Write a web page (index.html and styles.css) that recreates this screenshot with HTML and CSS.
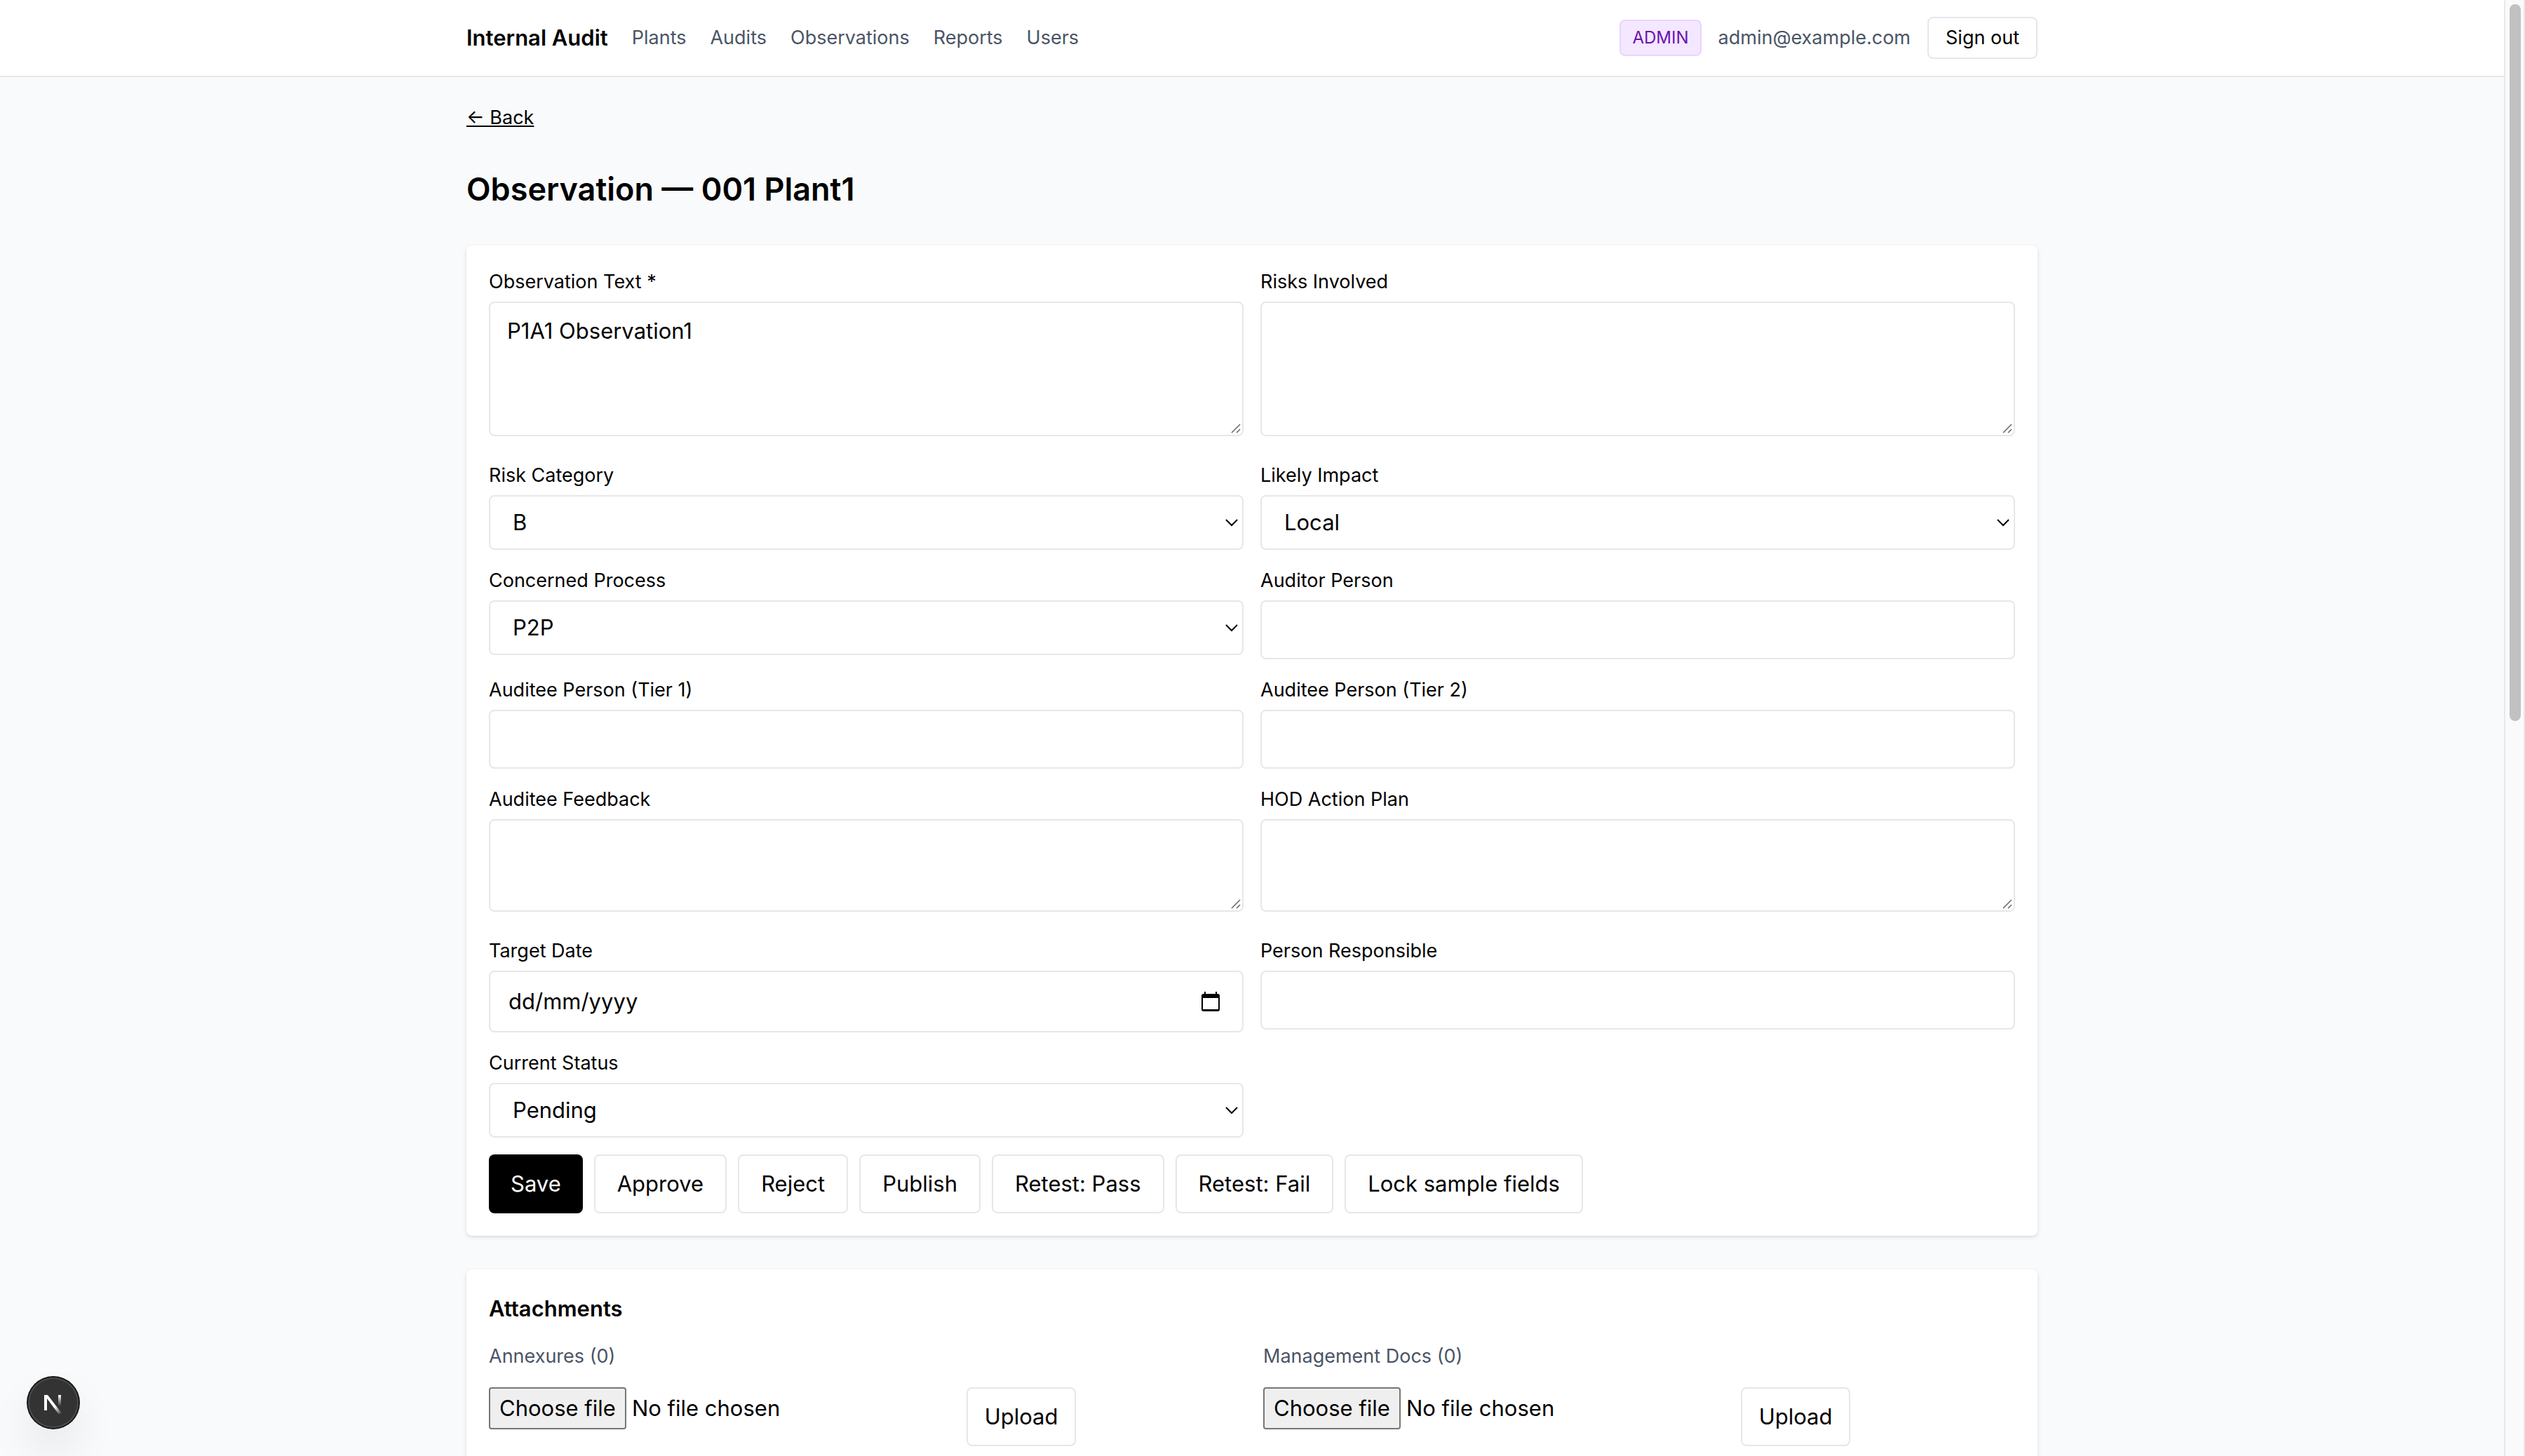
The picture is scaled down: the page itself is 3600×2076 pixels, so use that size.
FILE: index.html
```html
<!DOCTYPE html>
<html lang="en-GB">
<head>
  <meta charset="utf-8">
  <meta name="viewport" content="width=device-width, initial-scale=1">
  <title>Internal Audit</title>
  <link rel="stylesheet" href="styles.css">
</head>
<body>
  <div class="window">
    <div class="page">
      <header class="topbar">
        <div class="container topbar-inner">
          <nav class="nav">
            <a class="brand" href="#">Internal Audit</a>
            <a href="#">Plants</a>
            <a href="#">Audits</a>
            <a href="#">Observations</a>
            <a href="#">Reports</a>
            <a href="#">Users</a>
          </nav>
          <div class="account">
            <span class="role">ADMIN</span>
            <span class="email">admin@example.com</span>
            <button class="button button-small" type="button">Sign out</button>
          </div>
        </div>
      </header>

      <main class="container main">
        <div class="crumbs"><a class="back" href="#">← Back</a></div>
        <h1 class="title">Observation — 001 Plant1</h1>

        <form class="card observation">
          <div class="fields">
            <div class="field field-area">
              <label for="text">Observation Text *</label>
              <textarea class="control area area-tall" id="text" required>P1A1 Observation1</textarea>
            </div>
            <div class="field field-area">
              <label for="risks">Risks Involved</label>
              <textarea class="control area area-tall" id="risks"></textarea>
            </div>
            <div class="field">
              <label for="category">Risk Category</label>
              <select class="control select" id="category"><option>A</option><option selected>B</option><option>C</option></select>
            </div>
            <div class="field">
              <label for="impact">Likely Impact</label>
              <select class="control select" id="impact"><option>Local</option></select>
            </div>
            <div class="field">
              <label for="process">Concerned Process</label>
              <select class="control select" id="process"><option>P2P</option></select>
            </div>
            <div class="field">
              <label for="auditor">Auditor Person</label>
              <input class="control" id="auditor" type="text">
            </div>
            <div class="field">
              <label for="tier1">Auditee Person (Tier 1)</label>
              <input class="control" id="tier1" type="text">
            </div>
            <div class="field">
              <label for="tier2">Auditee Person (Tier 2)</label>
              <input class="control" id="tier2" type="text">
            </div>
            <div class="field field-area">
              <label for="feedback">Auditee Feedback</label>
              <textarea class="control area" id="feedback" rows="2"></textarea>
            </div>
            <div class="field field-area">
              <label for="plan">HOD Action Plan</label>
              <textarea class="control area" id="plan" rows="2"></textarea>
            </div>
            <div class="field">
              <label for="target">Target Date</label>
              <div class="control date">
                <input class="date-input" id="target" type="text" inputmode="numeric" placeholder="dd/mm/yyyy">
                <button class="date-button" type="button" aria-label="Open calendar">
                  <svg width="26" height="28" viewBox="0 0 26 28" aria-hidden="true">
                    <path fill="#000" fill-rule="evenodd" d="M4 0h2v3h14V0h2v3h1a3 3 0 0 1 3 3v19a3 3 0 0 1-3 3H3a3 3 0 0 1-3-3V6a3 3 0 0 1 3-3h1zM2 9v16h22V9z"/>
                  </svg>
                </button>
              </div>
            </div>
            <div class="field">
              <label for="responsible">Person Responsible</label>
              <input class="control" id="responsible" type="text">
            </div>
            <div class="field">
              <label for="status">Current Status</label>
              <select class="control select" id="status"><option>Pending</option></select>
            </div>
          </div>
          <div class="actions">
            <button class="button button-primary" type="button">Save</button>
            <button class="button" type="button">Approve</button>
            <button class="button" type="button">Reject</button>
            <button class="button" type="button">Publish</button>
            <button class="button" type="button">Retest: Pass</button>
            <button class="button" type="button">Retest: Fail</button>
            <button class="button" type="button">Lock sample fields</button>
          </div>
        </form>

        <section class="card attachments">
          <h2 class="section-title">Attachments</h2>
          <div class="uploads">
            <div class="upload">
              <h3 class="upload-title">Annexures (0)</h3>
              <form class="upload-row">
                <label class="file"><input class="file-input" type="file"><span class="file-button">Choose file</span><span>No file chosen</span></label>
                <button class="button button-upload" type="button">Upload</button>
              </form>
            </div>
            <div class="upload">
              <h3 class="upload-title">Management Docs (0)</h3>
              <form class="upload-row">
                <label class="file"><input class="file-input" type="file"><span class="file-button">Choose file</span><span>No file chosen</span></label>
                <button class="button button-upload" type="button">Upload</button>
              </form>
            </div>
          </div>
        </section>
      </main>
    </div>
    <div class="scrollbar" aria-hidden="true"><div class="thumb"></div></div>
  </div>

  <button class="devtools" type="button" aria-label="Open developer tools">
    <svg width="76" height="76" viewBox="0 0 76 76" aria-hidden="true">
      <defs>
        <linearGradient id="diagonal" gradientUnits="userSpaceOnUse" x1="41" y1="43" x2="50" y2="54">
          <stop offset="0" stop-color="#fff"/><stop offset="1" stop-color="#fff" stop-opacity="0"/>
        </linearGradient>
        <linearGradient id="stem" x1="0" y1="0" x2="0" y2="1">
          <stop offset="0" stop-color="#fff"/><stop offset="1" stop-color="#fff" stop-opacity="0"/>
        </linearGradient>
      </defs>
      <circle cx="38" cy="38" r="38" fill="#171717"/>
      <circle cx="38" cy="38" r="36" fill="#4b4b4b"/>
      <circle cx="38" cy="38" r="34" fill="#333"/>
      <path d="M25 27h5l20 26-4 2-17-23v17h-4z" fill="url(#diagonal)"/>
      <rect x="45" y="27" width="4" height="16" fill="url(#stem)"/>
    </svg>
  </button>
</body>
</html>
```
FILE: styles.css
```css
:root {
  --line: #e5e7eb;
  --muted: #4a5565;
  --surface: #fff;
  --canvas: #f9fafb;
}

*,
*::before,
*::after {
  box-sizing: border-box;
}

body,
h1,
h2,
h3 {
  margin: 0;
}

body {
  background: var(--canvas);
  color: #000;
  font-family: Inter, "Liberation Sans", sans-serif;
  font-size: 31px;
  line-height: 48px;
}

button,
input,
select,
textarea {
  margin: 0;
  color: inherit;
  font: inherit;
}

a {
  color: inherit;
  text-decoration: none;
}

.window {
  display: grid;
  grid-template-columns: minmax(0, 1fr) 30px;
  height: 100vh;
}

.page {
  overflow-y: auto;
  scrollbar-width: none;
}

.scrollbar {
  padding: 6px 4px 6px 6px;
  border: solid #e8e8e8;
  border-width: 0 2px;
  background: #fafafa;
}

.thumb {
  width: 16px;
  height: 49.5%;
  border-radius: 8px;
  background: #c1c1c1;
}

.container {
  max-width: 2304px;
  margin: 0 auto;
  padding: 0 32px;
}

/* Top bar */

.topbar {
  border-bottom: 2px solid var(--line);
  background: var(--surface);
}

.topbar-inner {
  display: flex;
  align-items: center;
  justify-content: space-between;
  padding-top: 24px;
  padding-bottom: 24px;
}

.nav,
.account {
  display: flex;
  align-items: center;
  font-size: 27px;
  line-height: 40px;
}

.nav {
  gap: 34px;
  color: var(--muted);
}

.brand {
  color: #000;
  font-size: 31px;
  font-weight: 600;
}

.account {
  gap: 24px;
}

.role {
  padding: 8px 16px;
  border: 2px solid #e9d4ff;
  border-radius: 8px;
  background: #f3e8ff;
  color: #6e11b0;
  font-size: 24px;
  line-height: 32px;
}

.email {
  color: var(--muted);
}

/* Page heading */

.main {
  display: flex;
  flex-direction: column;
  gap: 48px;
  padding-top: 32px;
  padding-bottom: 32px;
}

.crumbs {
  display: flex;
}

.back {
  padding-top: 4px;
  font-size: 27px;
  line-height: 44px;
  text-decoration: underline;
}

.title {
  font-size: 45px;
  font-weight: 600;
  line-height: 64px;
}

/* Cards */

.card {
  display: flex;
  flex-direction: column;
  gap: 24px;
  padding: 32px;
  border-radius: 8px;
  background: var(--surface);
  box-shadow: 0 2px 6px rgb(0 0 0 / 10%), 0 2px 4px -2px rgb(0 0 0 / 10%);
}

.fields {
  display: grid;
  grid-template-columns: repeat(2, minmax(0, 1fr));
  align-items: start;
  gap: 24px;
}

.field {
  display: flex;
  flex-direction: column;
  gap: 8px;
}

.field-area {
  padding-bottom: 12px;
}

.field label {
  font-size: 27px;
  line-height: 40px;
}

.control {
  width: 100%;
  padding: 16px 24px;
  border: 2px solid var(--line);
  border-radius: 8px;
  background-color: var(--surface);
  line-height: 48px;
}

input.control {
  height: 84px;
}

.area {
  display: block;
  resize: vertical;
  background-image: url("data:image/svg+xml,%3Csvg xmlns='http://www.w3.org/2000/svg' width='14' height='14'%3E%3Cpath d='M1 13L13 1M8 13l5-5' stroke='%23666' stroke-width='1.5' fill='none'/%3E%3C/svg%3E");
  background-position: right 2px bottom 2px;
  background-repeat: no-repeat;
}

.area::-webkit-resizer {
  background: transparent;
}

.area-tall {
  min-height: 192px;
}

.select {
  height: 78px;
  padding: 12px 32px;
  appearance: none;
  background-image: url("data:image/svg+xml,%3Csvg xmlns='http://www.w3.org/2000/svg' width='18' height='12'%3E%3Cpath d='M1 2l8 8 8-8' stroke='%23000' stroke-width='2' fill='none'/%3E%3C/svg%3E");
  background-position: right 6px center;
  background-repeat: no-repeat;
}

.date {
  display: flex;
  align-items: center;
  height: 88px;
  padding: 16px 32px 16px 26px;
}

.date-input {
  flex: 1;
  padding: 0;
  border: 0;
  outline: 0;
  background: none;
}

.date-input::placeholder {
  color: #000;
  opacity: 1;
}

.date-button {
  display: flex;
  padding: 0;
  border: 0;
  background: none;
}

/* Buttons */

.button {
  padding: 16px 31px;
  border: 2px solid var(--line);
  border-radius: 8px;
  background: var(--surface);
  line-height: 48px;
}

.button-small {
  padding: 8px 24px;
  font-size: 27px;
  line-height: 40px;
}

.button-primary {
  border: 0;
  background: #000;
  color: #fff;
}

.button-upload {
  padding: 16px 24px;
}

.actions {
  display: flex;
  flex-wrap: wrap;
  gap: 16px;
}

/* Attachments */

.section-title {
  font-size: 31px;
  font-weight: 600;
}

.uploads {
  display: grid;
  grid-template-columns: repeat(2, minmax(0, 1fr));
  gap: 32px;
}

.upload {
  display: flex;
  flex-direction: column;
  gap: 24px;
}

.upload-title {
  color: var(--muted);
  font-size: 27px;
  font-weight: 400;
  line-height: 40px;
}

.upload-row {
  display: flex;
  align-items: flex-start;
  gap: 16px;
}

.file {
  position: relative;
  display: flex;
  flex: 0 0 62%;
  align-items: center;
  gap: 8px;
}

.file-input {
  position: absolute;
  inset: 0;
  opacity: 0;
}

.file-button {
  padding: 4px 13px;
  border: 2px solid #767676;
  border-radius: 4px;
  background: #efefef;
}

/* Floating developer badge */

.devtools {
  position: fixed;
  bottom: 38px;
  left: 38px;
  display: flex;
  padding: 0;
  border: 0;
  border-radius: 50%;
  background: none;
  box-shadow: 0 32px 64px -8px rgb(0 0 0 / 12%);
}
```
